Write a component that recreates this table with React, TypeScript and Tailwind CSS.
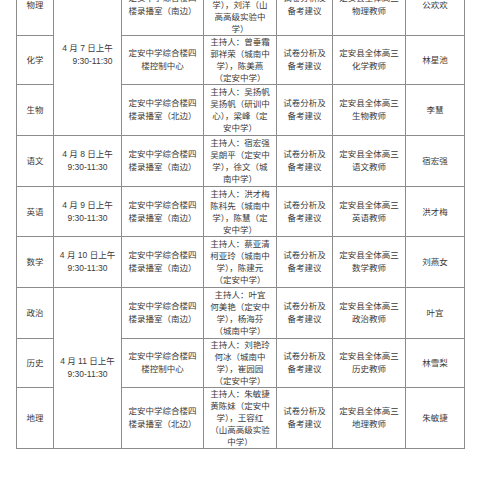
import React from "react";

type Row = {
  subject: string;
  date?: string[];
  span?: number;
  dateShift?: boolean;
  place: string[];
  host: string[];
  teacher: string;
  name: string;
  h: string;
};

const rows: Row[] = [
  {
    subject: "物理",
    date: ["4 月 7 日上午", "9:30-11:30"],
    span: 3,
    dateShift: true,
    place: ["定安中学综合楼四", "楼录播室（南边）"],
    host: ["主持人：公欢欢", "陈少华（定安中", "学），刘洋（山", "高高级实验中", "学）"],
    teacher: "物理教师",
    name: "公欢欢",
    h: "h-[61px]",
  },
  {
    subject: "化学",
    place: ["定安中学综合楼四", "楼控制中心"],
    host: ["主持人：曾垂霜", "郭祥荣（城南中", "学），陈美燕", "（定安中学）"],
    teacher: "化学教师",
    name: "林星池",
    h: "h-[49px]",
  },
  {
    subject: "生物",
    place: ["定安中学综合楼四", "楼录播室（北边）"],
    host: ["主持人：吴扬帆", "吴扬帆（研训中", "心），梁峰（定", "安中学）"],
    teacher: "生物教师",
    name: "李慧",
    h: "h-[51px]",
  },
  {
    subject: "语文",
    date: ["4 月 8 日上午", "9:30-11:30"],
    span: 1,
    place: ["定安中学综合楼四", "楼录播室（南边）"],
    host: ["主持人：宿宏强", "吴朗平（定安中", "学），徐文（城", "南中学）"],
    teacher: "语文教师",
    name: "宿宏强",
    h: "h-[51px]",
  },
  {
    subject: "英语",
    date: ["4 月 9 日上午", "9:30-11:30"],
    span: 1,
    place: ["定安中学综合楼四", "楼录播室（南边）"],
    host: ["主持人：洪才梅", "陈科先（城南中", "学），陈慧（定", "安中学）"],
    teacher: "英语教师",
    name: "洪才梅",
    h: "h-[50px]",
  },
  {
    subject: "数学",
    date: ["4 月 10 日上午", "9:30-11:30"],
    span: 1,
    place: ["定安中学综合楼四", "楼录播室（南边）"],
    host: ["主持人：蔡亚清", "柯亚玲（城南中", "学），陈建元", "（定安中学）"],
    teacher: "数学教师",
    name: "刘燕女",
    h: "h-[51px]",
  },
  {
    subject: "政治",
    date: ["4 月 11 日上午", "9:30-11:30"],
    span: 3,
    place: ["定安中学综合楼四", "楼录播室（南边）"],
    host: ["主持人：叶宜", "何美艳（定安中", "学），杨海芬", "（城南中学）"],
    teacher: "政治教师",
    name: "叶宜",
    h: "h-[51px]",
  },
  {
    subject: "历史",
    place: ["定安中学综合楼四", "楼控制中心"],
    host: ["主持人：刘艳玲", "何冰（城南中", "学），崔园园", "（定安中学）"],
    teacher: "历史教师",
    name: "林雪梨",
    h: "h-[49px]",
  },
  {
    subject: "地理",
    place: ["定安中学综合楼四", "楼录播室（北边）"],
    host: ["主持人：朱敏捷", "黄陈妹（定安中", "学），王容红", "（山高高级实验", "中学）"],
    teacher: "地理教师",
    name: "朱敏捷",
    h: "h-[61px]",
  },
];

const cell = "border border-[#8c8c8c] px-[2px] py-0 text-center align-middle";

function Lines({ lines }: { lines: string[] }) {
  return (
    <>
      {lines.map((l, i) => (
        <div key={i} className="whitespace-nowrap">
          {l}
        </div>
      ))}
    </>
  );
}

export default function App() {
  return (
    <div className="h-[480px] w-[480px] overflow-hidden bg-white">
      <table className="-mt-[26px] ml-4 w-[448px] table-fixed border-collapse text-[8.5px] leading-[12px] text-[#3a3a3a] font-['Liberation_Sans','Noto_Sans_CJK_SC',sans-serif]">
        <colgroup>
          <col className="w-[37px]" />
          <col className="w-[68px]" />
          <col className="w-[82px]" />
          <col className="w-[73px]" />
          <col className="w-[56px]" />
          <col className="w-[73px]" />
          <col className="w-[59px]" />
        </colgroup>
        <tbody>
          {rows.map((r) => (
            <tr key={r.subject} className={r.h}>
              <td className={cell}>{r.subject}</td>
              {r.date && (
                <td className={cell} rowSpan={r.span}>
                  <div className="leading-[13px]">
                    <div>{r.date[0]}</div>
                    <div className={r.dateShift ? "pl-[10px]" : ""}>{r.date[1]}</div>
                  </div>
                </td>
              )}
              <td className={cell}>
                <div className="leading-[13px]">
                  <Lines lines={r.place} />
                </div>
              </td>
              <td className={cell}>
                <Lines lines={r.host} />
              </td>
              <td className={cell}>
                <div className="leading-[13px]">
                  <div>试卷分析及</div>
                  <div>备考建议</div>
                </div>
              </td>
              <td className={cell}>
                <div className="leading-[13px]">
                  <div>定安县全体高三</div>
                  <div>{r.teacher}</div>
                </div>
              </td>
              <td className={cell}>{r.name}</td>
            </tr>
          ))}
        </tbody>
      </table>
    </div>
  );
}
